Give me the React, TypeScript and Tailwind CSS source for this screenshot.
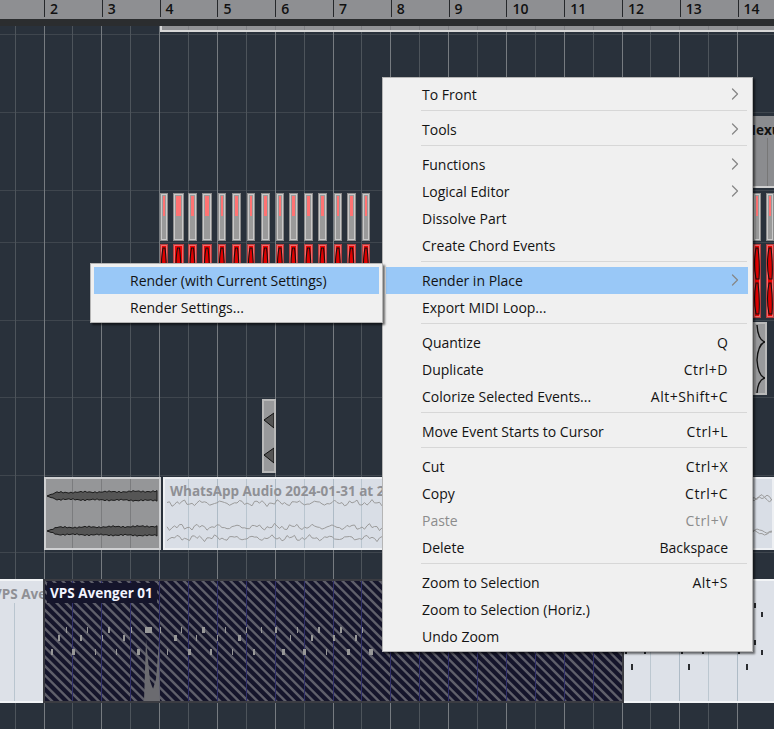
import { ChevronRight } from 'lucide-react';

const BEATS = Array.from({ length: 27 }, (_, i) => -1 + i);
const beatX = (n: number) => Math.round(14.6 + n * 28.9);
const ROWS_Y = [8, 86, 164, 216, 294, 371, 449, 526];
const BARS = [2, 3, 4, 5, 6, 7, 8, 9, 10, 11, 12, 13, 14];

const METERS: [number, number][] = [
  [160, 8], [173, 11], [188, 9], [202, 10], [218, 8], [232, 9], [247, 8], [261, 9],
  [276, 8], [289, 9], [304, 9], [318, 9], [334, 8], [347, 9], [362, 8], [753, 8], [766, 8],
];

const NOTE_ROWS: { y: number; h: number; xs: [number, number][] }[] = [
  { y: 48, h: 6, xs: [[66, 1], [87, 1], [108, 2], [131, 1], [145, 7], [160, 1], [181, 1], [202, 3], [225, 1], [246, 1], [261, 1], [275, 2], [297, 1], [318, 2], [340, 2], [362, 1], [384, 1]] },
  { y: 56, h: 6, xs: [[58, 2], [80, 2], [102, 1], [123, 2], [174, 3], [196, 1], [217, 1], [238, 3], [290, 1], [311, 2], [333, 2], [355, 2]] },
  { y: 70, h: 6, xs: [[51, 2], [72, 3], [95, 1], [116, 1], [137, 3], [167, 1], [188, 3], [210, 2], [232, 1], [253, 2], [282, 3], [303, 3], [326, 1], [347, 3], [369, 4]] },
];

const RIGHT_TICKS: [number, number, number][] = [
  [754, 603, 5], [761, 612, 5], [754, 640, 5], [761, 650, 5], [625, 651, 3], [644, 651, 3],
  [681, 651, 3], [702, 651, 3], [738, 651, 3], [631, 664, 6], [688, 664, 6], [746, 664, 6],
];

const wave = (x0: number, x1: number, y: number, seed: number, amp = 1.7) => {
  let d = '';
  for (let x = x0; x <= x1; x += 2.5) {
    const v =
      Math.sin(x * 0.33 + seed) + 0.7 * Math.sin(x * 0.87 + seed * 2.1) + 0.5 * Math.sin(x * 1.71 + seed * 3.3);
    d += `${d ? 'L' : 'M'}${x.toFixed(1)} ${(y + v * amp).toFixed(1)}`;
  }
  return d;
};

const blob = (y: number, seed: number) => {
  const top: string[] = [];
  const bottom: string[] = [];
  for (let x = 5; x <= 112; x += 2) {
    const t = Math.min(1, (x - 1) / 10);
    const thick = t * (3.4 + (x / 114) * 1.4 + 0.7 * Math.sin(x * 1.3 + seed) + 0.4 * Math.sin(x * 2.9 + seed));
    top.push(`${x} ${(y - thick).toFixed(1)}`);
    bottom.unshift(`${x} ${(y + thick * 0.95).toFixed(1)}`);
  }
  return `M1 ${y}L${top.join('L')}L${bottom.join('L')}Z`;
};

// lines of the arrangement that also show through the lighter events
const BeatLines = ({ x0, x1, beat, bar }: { x0: number; x1: number; beat: string; bar: string }) => (
  <>
    {BEATS.filter((n) => beatX(n) > x0 && beatX(n) < x1).map((n) => (
      <div
        key={n}
        className={`absolute top-0 bottom-0 w-px ${n % 2 === 1 ? bar : beat}`}
        style={{ left: beatX(n) - x0 }}
      />
    ))}
  </>
);

const Meter = ({ x, w }: { x: number; w: number }) => {
  const c = w / 2;
  return (
    <>
      <div
        className="absolute top-[167px] h-[48px] border border-[#8d8d8d] bg-[#9a9a9a] shadow-[inset_0_0_0_1px_#c9c9c9]"
        style={{ left: x, width: w }}
      >
        <div className="mx-[2px] mt-[2px] h-[20px] bg-[#ff7272]" />
      </div>
      <svg className="absolute top-[218px]" style={{ left: x }} width={w} height={74} viewBox={`0 0 ${w} 74`}>
        <rect x="0.5" y="0.5" width={w - 1} height="73" fill="#ef6a6a" stroke="#b84040" />
        <rect x="2" y="2" width={w - 4} height="70" fill="#f00000" />
        <path d={`M${c - 1} 4Q${c - 4} 20 ${c - 1} 35L${c + 2} 35Q${c + 3} 20 ${c + 1} 4Z`} fill="#e00000" stroke="#111" strokeWidth="1.1" />
        <path d={`M${c - 1} 39Q${c - 4} 55 ${c - 1} 70L${c + 2} 70Q${c + 3} 55 ${c + 1} 39Z`} fill="#e00000" stroke="#111" strokeWidth="1.1" />
      </svg>
    </>
  );
};

const Arrangement = () => (
  <div className="relative flex-1 overflow-hidden bg-[#29313b]">
    {ROWS_Y.map((y) => (
      <div key={y} className="absolute left-0 right-0 h-px bg-[#3f464e]" style={{ top: y }} />
    ))}
    {BEATS.map((n) => (
      <div
        key={n}
        className={`absolute top-0 bottom-0 w-px ${n % 2 === 1 ? 'bg-[#767b80]' : 'bg-[#4d545b]'}`}
        style={{ left: beatX(n) }}
      />
    ))}

    {/* long event along the top */}
    <div className="absolute left-[160px] right-0 top-0 h-[6px] border-b-2 border-l-2 border-[#d8d8d8] bg-[#929396]">
      <BeatLines x0={162} x1={774} beat="bg-[#808185]" bar="bg-[#808185]" />
    </div>

    {/* Nexus event */}
    <div className="absolute left-[753px] top-[90px] h-[72px] w-[21px] overflow-hidden border-b-2 border-[#d0d0d0] bg-[#8b8c8f]">
      <span className="absolute left-[-8px] top-[4px] text-[13.5px] font-bold text-[#111]">Nexus</span>
      <div className="absolute left-[14px] top-[22px] bottom-0 w-px bg-[#777]" />
    </div>

    {METERS.map(([x, w]) => (
      <Meter key={x} x={x} w={w} />
    ))}

    {/* small events with a fade */}
    <div className="absolute left-[753px] top-[296px] h-[73px] w-[14px] border-2 border-[#b9b9b9] bg-[#999a9c]">
      <svg className="absolute left-0 top-0" width="10" height="69" viewBox="0 0 10 69">
        <path d="M2 1Q3 16 10 18Q3 20 2 36Q3 52 10 54Q3 56 2 69" fill="none" stroke="#111" strokeWidth="1.4" />
      </svg>
    </div>
    <div className="absolute left-[262px] top-[373px] h-[74px] w-[14px] border-2 border-[#b9b9b9] bg-[#98999b]">
      <svg className="absolute left-0 top-0" width="10" height="70" viewBox="0 0 10 70">
        <path d="M0 19L10 12V27Z" fill="#555" stroke="#111" />
        <path d="M0 54L10 47V62Z" fill="#555" stroke="#111" />
      </svg>
    </div>

    {/* audio events */}
    <div className="absolute left-[44px] right-0 top-[451px] flex h-[73px] gap-[2px]">
      <div className="relative w-[117px] border-2 border-[#cfd0d2] bg-[#959698]">
        <BeatLines x0={46} x1={159} beat="bg-[#7b7c7e]" bar="bg-[#7b7c7e]" />
        <svg className="absolute left-0 top-0" width="113" height="69" viewBox="0 0 113 69">
          <path d={blob(17, 1)} fill="#555" stroke="#111" strokeWidth="0.9" />
          <path d={blob(52, 2)} fill="#555" stroke="#111" strokeWidth="0.9" />
        </svg>
      </div>
      <div className="relative flex-1 overflow-hidden border-2 border-[#eef0f3] bg-[#d9dee6]">
        <BeatLines x0={165} x1={774} beat="bg-[#b9c5cf]" bar="bg-[#aebbc6]" />
        <span className="absolute left-[5px] top-[2px] whitespace-nowrap text-[13.5px] font-bold text-[#8f9095]">
          WhatsApp Audio 2024-01-31 at 2
        </span>
        <svg className="absolute left-0 top-0" width="609" height="69" viewBox="165 479 609 69">
          <path d={wave(167, 382, 503, 1)} fill="none" stroke="#9b9b9b" strokeWidth="1" />
          <path d={wave(167, 382, 527, 2)} fill="none" stroke="#9b9b9b" strokeWidth="1" />
          <path d={wave(167, 382, 538, 3)} fill="none" stroke="#9b9b9b" strokeWidth="1" />
          <path d={wave(752, 774, 497, 4)} fill="none" stroke="#9b9b9b" strokeWidth="1" />
          <path d={wave(752, 774, 499, 5)} fill="none" stroke="#9b9b9b" strokeWidth="1" />
          <path d={wave(752, 774, 531, 6)} fill="none" stroke="#9b9b9b" strokeWidth="1" />
          <path d={wave(752, 774, 533, 7)} fill="none" stroke="#9b9b9b" strokeWidth="1" />
        </svg>
      </div>
    </div>

    {/* bottom track */}
    <div className="absolute left-0 right-0 top-[553px] flex h-[124px]">
      <div className="relative w-[43px] overflow-hidden border-b-2 border-t-2 border-[#f2f4f6] bg-[#dde1e8]">
        <div className="absolute left-[14px] top-[22px] bottom-0 w-px bg-[#b9c5cf]" />
        <span className="absolute left-[-7px] top-[3px] whitespace-nowrap text-[13.5px] font-bold text-[#8f9095]">VPS Avenger 01</span>
      </div>
      <div className="relative w-[581px] overflow-hidden border-2 border-[#3b3c42] bg-[repeating-linear-gradient(45deg,#15152b_0px,#15152b_3.2px,#5f5f6a_4.2px,#5f5f6a_5.6px,#15152b_6.6px)]">
        <BeatLines x0={45} x1={622} beat="bg-[#30306a]" bar="bg-[#30306a]" />
        <div className="absolute left-[2px] top-[2px] flex h-[20px] w-[110px] items-center whitespace-nowrap bg-[#15152b] pl-[3px] text-[13.5px] font-bold text-[#f2f4ff]">
          VPS Avenger 01
        </div>
        {NOTE_ROWS.map((row) =>
          row.xs.map(([x, w]) => (
            <div
              key={`${row.y}-${x}`}
              className="absolute bg-[#989898]"
              style={{ left: x - 45, top: row.y - 2, width: w, height: row.h }}
            />
          ))
        )}
        <svg className="absolute left-[99px] top-[56px]" width="16" height="64" viewBox="0 0 16 64">
          <path d="M0 64L2 2L6 44L9 52L12 42L15 4L16 64Z" fill="#6b6b70" />
        </svg>
      </div>
      <div className="relative flex-1 overflow-hidden border-b-2 border-t-2 border-[#f2f4f6] bg-[#dde1e8]">
        <BeatLines x0={624} x1={774} beat="bg-[#bcc7d0]" bar="bg-[#aebbc6]" />
      </div>
    </div>
    {RIGHT_TICKS.map(([x, y, h]) => (
      <div key={`${x}-${y}`} className="absolute w-[2px] bg-[#2a2c30]" style={{ left: x, top: y - 26, height: h }} />
    ))}
  </div>
);

const Ruler = () => (
  <div className="flex h-[19px] shrink-0 items-start bg-[#8e8f92] pl-[44px]">
    {BARS.map((bar) => (
      <div key={bar} className="flex h-[17px] w-[57.8px] shrink-0 items-center border-l border-[#26282b] pl-[5px]">
        <span className="text-[14px] font-semibold leading-none text-[#111]">{bar}</span>
      </div>
    ))}
  </div>
);

type Item = { label: string; shortcut?: string; arrow?: boolean; active?: boolean; disabled?: boolean };

const MenuRow = ({ label, shortcut, arrow, active, disabled }: Item) => (
  <div
    className={`relative flex h-[27px] items-center justify-between pl-9 pr-5 text-[14px] ${
      active ? 'bg-[#99c8f7]' : ''
    } ${disabled ? 'text-[#8c8c8c]' : 'text-[#131313]'}`}
  >
    <span>{label}</span>
    {shortcut && <span className={shortcut.includes('+') ? 'tracking-[0.5px]' : ''}>{shortcut}</span>}
    {arrow && (
      <ChevronRight size={20} strokeWidth={1.5} className="absolute right-[3px] top-[3px] text-[#878787]" />
    )}
  </div>
);

const Sep = () => (
  <div className="h-2 pl-[35px] pr-px pt-[2px]">
    <div className="h-px w-full bg-[#d7d7d7]" />
  </div>
);

const GROUPS: Item[][] = [
  [{ label: 'To Front', arrow: true }],
  [{ label: 'Tools', arrow: true }],
  [
    { label: 'Functions', arrow: true },
    { label: 'Logical Editor', arrow: true },
    { label: 'Dissolve Part' },
    { label: 'Create Chord Events' },
  ],
  [{ label: 'Render in Place', arrow: true, active: true }, { label: 'Export MIDI Loop...' }],
  [
    { label: 'Quantize', shortcut: 'Q' },
    { label: 'Duplicate', shortcut: 'Ctrl+D' },
    { label: 'Colorize Selected Events...', shortcut: 'Alt+Shift+C' },
  ],
  [{ label: 'Move Event Starts to Cursor', shortcut: 'Ctrl+L' }],
  [
    { label: 'Cut', shortcut: 'Ctrl+X' },
    { label: 'Copy', shortcut: 'Ctrl+C' },
    { label: 'Paste', shortcut: 'Ctrl+V', disabled: true },
    { label: 'Delete', shortcut: 'Backspace' },
  ],
  [
    { label: 'Zoom to Selection', shortcut: 'Alt+S' },
    { label: 'Zoom to Selection (Horiz.)' },
    { label: 'Undo Zoom' },
  ],
];

const App = () => {
  return (
    <div className="relative flex h-[729px] w-[774px] flex-col overflow-hidden bg-[#29313b] font-['Open_Sans',sans-serif]">
      <Ruler />
      <div className="h-[7px] shrink-0 bg-[#2b2d2f]" />
      <Arrangement />

      {/* main context menu */}
      <div className="absolute left-[382px] top-[77px] w-[371px] border border-[#b5b5b5] bg-[#f0f0f0] pb-[1px] pl-[3px] pr-[4px] pt-[3px] shadow-[2px_2px_2px_rgba(0,0,0,0.55)]">
        {GROUPS.map((group, i) => (
          <div key={i}>
            {i > 0 && <Sep />}
            {group.map((item) => (
              <MenuRow key={item.label} {...item} />
            ))}
          </div>
        ))}
      </div>

      {/* render sub menu */}
      <div className="absolute left-[90px] top-[263px] w-[293px] border border-[#b5b5b5] bg-[#f0f0f0] pb-[1px] pl-[3px] pr-[3px] pt-[3px] shadow-[2px_2px_2px_rgba(0,0,0,0.55)]">
        <MenuRow label="Render (with Current Settings)" active />
        <MenuRow label="Render Settings..." />
      </div>
    </div>
  );
};

export default App;
